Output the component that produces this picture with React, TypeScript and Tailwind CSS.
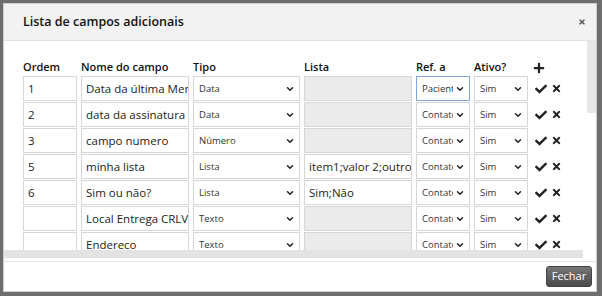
import { ChevronDown } from "lucide-react";
import { FaCheck, FaTimes, FaPlus } from "react-icons/fa";

type Row = {
  ordem: string;
  nome: string;
  tipo: string;
  lista: string | null;
  ref: string;
  ativo: string;
  focused?: boolean;
};

const rows: Row[] = [
  { ordem: "1", nome: "Data da última Menstruação", tipo: "Data", lista: null, ref: "Paciente", ativo: "Sim", focused: true },
  { ordem: "2", nome: "data da assinatura", tipo: "Data", lista: null, ref: "Contato", ativo: "Sim" },
  { ordem: "3", nome: "campo numero", tipo: "Número", lista: null, ref: "Contato", ativo: "Sim" },
  { ordem: "5", nome: "minha lista", tipo: "Lista", lista: "item1;valor 2;outro valor", ref: "Contato", ativo: "Sim" },
  { ordem: "6", nome: "Sim ou não?", tipo: "Lista", lista: "Sim;Não", ref: "Contato", ativo: "Sim" },
  { ordem: "", nome: "Local Entrega CRLV", tipo: "Texto", lista: null, ref: "Contato", ativo: "Sim" },
  { ordem: "", nome: "Endereco", tipo: "Texto", lista: null, ref: "Contato", ativo: "Sim" },
];

const Field = ({ value, disabled }: { value?: string; disabled?: boolean }) => (
  <div
    className={`h-[25px] border border-[#d6d6d6] pl-[4px] flex items-center overflow-hidden whitespace-nowrap text-[11.5px] text-[#222] ${
      disabled ? "bg-[#ebebeb]" : "bg-white"
    }`}
  >
    {value}
  </div>
);

const Select = ({ value, focused }: { value: string; focused?: boolean }) => (
  <div
    className={`h-[25px] border bg-white pl-[5px] pr-[4px] flex items-center gap-[2px] text-[9.5px] text-[#333] ${
      focused ? "border-[#7ea6d6]" : "border-[#d6d6d6]"
    }`}
  >
    <span className="flex-1 overflow-hidden whitespace-nowrap pt-[1px]">{value}</span>
    <ChevronDown size={10} strokeWidth={3.5} className="text-[#222] shrink-0" />
  </div>
);

export default function App() {
  return (
    <div className="w-[602px] h-[296px] bg-[#6e6e6e] pt-[3px] pl-[3px] pr-[5px] pb-[4px] [font-family:'Open_Sans',sans-serif]">
      <div className="h-full bg-white border border-[#cfcfcf] flex flex-col">
        {/* header */}
        <div className="h-[37px] shrink-0 bg-[#f2f2f2] border-b border-[#e3e3e3] flex items-center justify-between pl-[19px] pr-[10px]">
          <h2 className="text-[12.5px] font-semibold text-[#111]">Lista de campos adicionais</h2>
          <FaTimes size={8} className="text-[#555]" />
        </div>

        {/* body */}
        <div className="flex h-[217px] shrink-0">
          <div className="flex-1 flex flex-col min-w-0">
            <div className="h-[209px] overflow-hidden pl-[19px] pt-[19px]">
              <div className="grid grid-cols-[54px_108px_107px_108px_54px_54px_40px] gap-x-[4px] gap-y-[1px]">
                {["Ordem", "Nome do campo", "Tipo", "Lista", "Ref. a", "Ativo?"].map((h) => (
                  <div key={h} className="h-[15px] flex items-center text-[11px] font-semibold text-[#111]">
                    {h}
                  </div>
                ))}
                <div className="h-[15px] flex items-center pl-[1px]">
                  <FaPlus size={12} className="text-[#222]" />
                </div>

                {rows.map((r, i) => (
                  <div key={i} className="contents">
                    <Field value={r.ordem} />
                    <Field value={r.nome} />
                    <Select value={r.tipo} />
                    <Field value={r.lista ?? ""} disabled={r.lista === null} />
                    <Select value={r.ref} focused={r.focused} />
                    <Select value={r.ativo} />
                    <div className="h-[25px] flex items-center gap-[4px] pl-[3px] text-[#222]">
                      <FaCheck size={12} />
                      <FaTimes size={11} />
                    </div>
                  </div>
                ))}
              </div>
            </div>
            <div className="h-[8px] mr-[4px] bg-[#e3e3e3]" />
          </div>
          <div className="w-[9px] shrink-0">
            <div className="h-[72px] bg-[#e6e6e6]" />
          </div>
        </div>

        {/* footer */}
        <div className="mt-[3px] flex-1 border-t border-[#e3e3e3] flex items-center justify-end pr-[4px]">
          <button className="w-[46px] h-[21px] rounded-[3px] border border-[#444] bg-gradient-to-b from-[#777] to-[#4a4a4a] text-white text-[11px]">
            Fechar
          </button>
        </div>
      </div>
    </div>
  );
}
